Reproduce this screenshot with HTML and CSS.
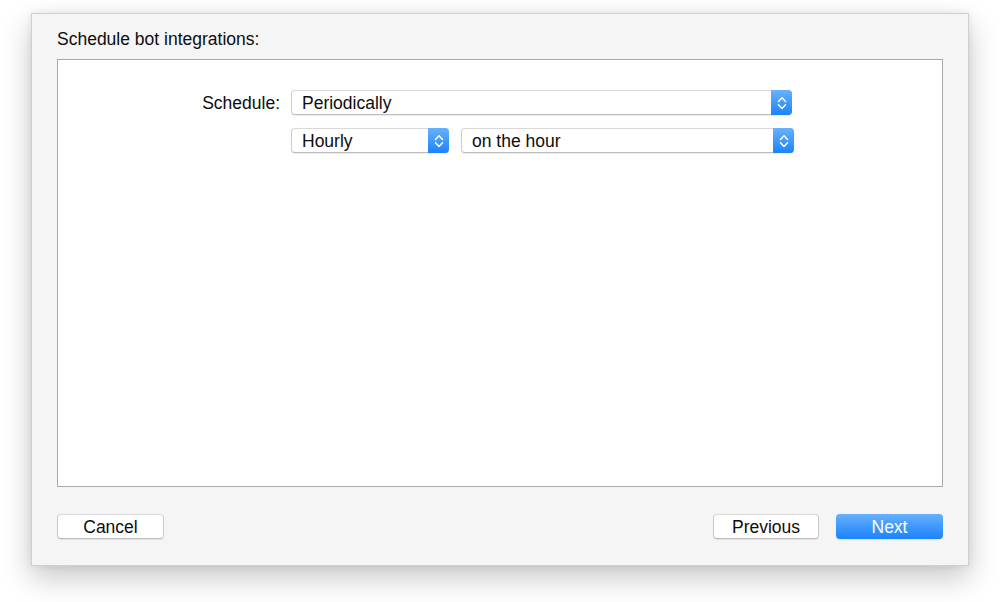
FILE: index.html
```html
<!DOCTYPE html>
<html>
<head>
<meta charset="utf-8">
<link rel="stylesheet" href="styles.css">
</head>
<body>
<div class="window">
  <div class="title">Schedule bot integrations:</div>
  <div class="panel">
    <div class="row">
      <div class="label">Schedule:</div>
      <div class="popup popup-wide"><span class="popup-text">Periodically</span><span class="stepper"><svg width="12" height="16" viewBox="0 0 12 16"><path d="M2.5 6.5 L6 2.8 L9.5 6.5 M2.5 9.8 L6 13.5 L9.5 9.8" fill="none" stroke="#fff" stroke-width="1.5" stroke-linecap="round" stroke-linejoin="round"/></svg></span></div>
    </div>
    <div class="row">
      <div class="label"></div>
      <div class="popup popup-hourly"><span class="popup-text">Hourly</span><span class="stepper"><svg width="12" height="16" viewBox="0 0 12 16"><path d="M2.5 6.5 L6 2.8 L9.5 6.5 M2.5 9.8 L6 13.5 L9.5 9.8" fill="none" stroke="#fff" stroke-width="1.5" stroke-linecap="round" stroke-linejoin="round"/></svg></span></div>
      <div class="popup popup-when"><span class="popup-text">on the hour</span><span class="stepper"><svg width="12" height="16" viewBox="0 0 12 16"><path d="M2.5 6.5 L6 2.8 L9.5 6.5 M2.5 9.8 L6 13.5 L9.5 9.8" fill="none" stroke="#fff" stroke-width="1.5" stroke-linecap="round" stroke-linejoin="round"/></svg></span></div>
    </div>
  </div>
  <div class="buttons">
    <div class="btn">Cancel</div>
    <div class="spacer"></div>
    <div class="btn btn-prev">Previous</div>
    <div class="btn btn-primary">Next</div>
  </div>
</div>
</body>
</html>
```

FILE: styles.css
```css
html, body {
  margin: 0;
  padding: 0;
  background: #ffffff;
}
body {
  padding: 13px 31px 36px 31px;
  font-family: "Liberation Sans", Arial, sans-serif;
  font-size: 17.5px;
  color: #0d0d0d;
}
.window {
  box-sizing: border-box;
  width: 938px;
  height: 553px;
  background: #f5f5f5;
  border: 1px solid #cfcfcf;
  box-shadow: 0 12px 28px rgba(0,0,0,0.22), 0 0 8px rgba(0,0,0,0.08);
  padding: 0 25px;
}
.title {
  padding-top: 15px;
  height: 20px;
  line-height: 20px;
  margin-bottom: 10px;
}
.panel {
  box-sizing: border-box;
  height: 428px;
  background: #ffffff;
  border: 1px solid #a9a9a9;
  padding-top: 30px;
}
.row {
  display: flex;
  align-items: center;
  margin-bottom: 13px;
}
.label {
  width: 222px;
  margin-right: 11px;
  text-align: right;
  padding-top: 2px;
}
.popup {
  box-sizing: border-box;
  height: 25px;
  display: flex;
  align-items: stretch;
  background: #ffffff;
  border: 1px solid #cdcdcd;
  border-bottom-color: #bdbdbd;
  border-top-color: #d8d8d8;
  border-radius: 4px;
  box-shadow: 0 0.5px 1px rgba(0,0,0,0.08);
}
.popup-wide { width: 501px; }
.popup-hourly { width: 158px; margin-right: 12px; }
.popup-when { width: 333px; }
.popup-text {
  flex: 1;
  padding-left: 10px;
  padding-top: 1px;
  line-height: 23px;
}
.stepper {
  width: 21px;
  margin: -1px -1px -1px 0;
  border-radius: 0 4px 4px 0;
  background: linear-gradient(#69b1fc, #1b83fb);
  display: flex;
  align-items: center;
  justify-content: center;
}
.buttons {
  display: flex;
  margin-top: 27px;
}
.spacer { flex: 1; }
.btn {
  box-sizing: border-box;
  width: 107px;
  height: 25px;
  padding-top: 1px;
  line-height: 22px;
  text-align: center;
  background: #ffffff;
  border: 1px solid #cdcdcd;
  border-bottom-color: #bcbcbc;
  border-top-color: #d8d8d8;
  border-radius: 4px;
  box-shadow: 0 0.5px 1px rgba(0,0,0,0.08);
}
.btn-prev {
  width: 106px;
  margin-right: 17px;
}
.btn-primary {
  color: #ffffff;
  border: none;
  line-height: 24px;
  background: linear-gradient(#67b0fd, #1a82fb);
}
```
